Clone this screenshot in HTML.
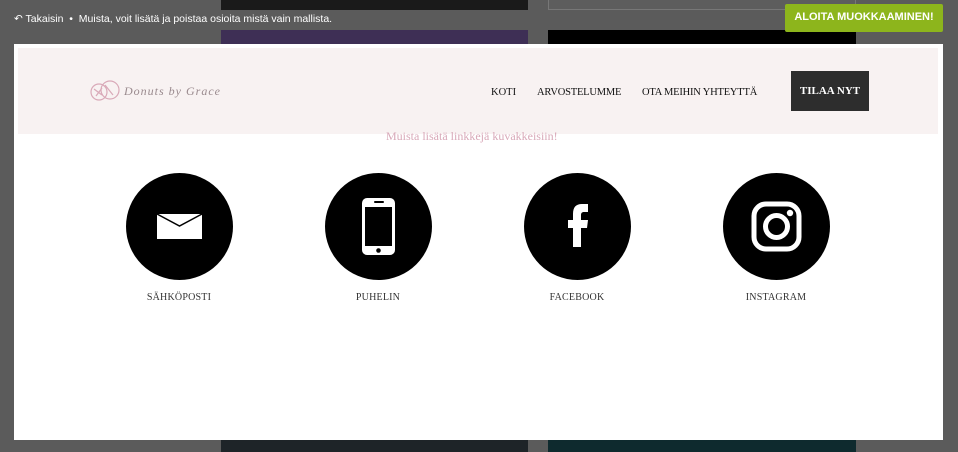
<!DOCTYPE html>
<html><head><meta charset="utf-8"><style>
*{margin:0;padding:0;box-sizing:border-box}
body{width:958px;height:452px;overflow:hidden;background:#5b5b5b;position:relative;font-family:"Liberation Sans",sans-serif}
.abs{position:absolute}
.serif{font-family:"Liberation Serif",serif}
.circ{position:absolute;width:107px;height:107px;border-radius:50%;background:#000;top:173px}
.lab{position:absolute;top:292px;width:160px;text-align:center;font-size:10px;color:#333;font-family:"Liberation Serif",serif;letter-spacing:.2px}
</style></head><body>
<div class="abs" style="left:221px;top:0;width:307px;height:10px;background:#1a1a1a"></div>
<div class="abs" style="left:548px;top:0;width:308px;height:10px;border:1px solid #777;border-top:none;background:#5d5d5d"></div>
<div class="abs" style="left:221px;top:30px;width:307px;height:20px;background:#3e2f55"></div>
<div class="abs" style="left:548px;top:30px;width:308px;height:20px;background:#000"></div>
<div class="abs" style="left:221px;top:440px;width:307px;height:12px;background:#1e2428"></div>
<div class="abs" style="left:548px;top:440px;width:308px;height:12px;background:#0e2a2e"></div>
<div class="abs" style="left:14px;top:13px;color:#fff;font-size:10.5px">&#8630; Takaisin &nbsp;•&nbsp; Muista, voit lisätä ja poistaa osioita mistä vain mallista.</div>
<div class="abs" style="left:785px;top:4px;width:158px;height:28px;background:#8db51c;color:#fff;font-size:11px;font-weight:bold;text-align:center;line-height:26px;border-radius:2px">ALOITA MUOKKAAMINEN!</div>
<div class="abs" style="left:14px;top:44px;width:929px;height:396px;background:#fff"></div>
<div class="abs" style="left:18px;top:48px;width:920px;height:86px;background:#f8f2f2"></div>
<svg class="abs" style="left:89px;top:79px" width="32" height="24" viewBox="0 0 32 24"><g fill="none" stroke="#d9a9b8" stroke-width="1.2"><circle cx="10" cy="13" r="8"/><circle cx="21" cy="11" r="9"/><path d="M5 10l8 6M16 6l8 10M7 17l6-8"/></g></svg>
<div class="abs serif" style="left:124px;top:84px;font-size:12px;font-style:italic;color:#9a8a8e;letter-spacing:1px">Donuts by Grace</div>
<div class="abs serif" style="left:491px;top:87px;font-size:10.5px;color:#111">KOTI</div>
<div class="abs serif" style="left:537px;top:87px;font-size:10.5px;color:#111;letter-spacing:-.2px">ARVOSTELUMME</div>
<div class="abs serif" style="left:642px;top:87px;font-size:10.5px;color:#111;letter-spacing:-.2px">OTA MEIHIN YHTEYTTÄ</div>
<div class="abs serif" style="left:791px;top:71px;width:78px;height:40px;background:#2d2d2d;color:#fff;font-size:11px;font-weight:bold;text-align:center;line-height:40px">TILAA NYT</div>
<div class="abs serif" style="left:386px;top:131px;font-size:12px;color:#d8a8b8;height:13px;overflow:hidden;line-height:10px">Muista lisätä linkkejä kuvakkeisiin!</div>
<div class="circ" style="left:126px"><svg width="107" height="107"><rect x="31" y="41" width="45" height="25" fill="#fff"/><path d="M31 41l22.5 12L76 41" fill="none" stroke="#000" stroke-width="1.5"/></svg></div>
<div class="circ" style="left:325px"><svg width="107" height="107"><rect x="37" y="25" width="33" height="57" rx="5" fill="#fff"/><rect x="40" y="34" width="27" height="39" fill="#000"/><rect x="49" y="28" width="10" height="2" rx="1" fill="#000"/><circle cx="53.5" cy="77.5" r="2.3" fill="#000"/></svg></div>
<div class="circ" style="left:524px"><svg width="107" height="107"><path d="M49 74V55h-5v-8h5v-6c0-7 3-10 9-10h6v8h-4c-2 0-3 1-3 3v5h7l-1 8h-6v19z" fill="#fff"/></svg></div>
<div class="circ" style="left:723px"><svg width="107" height="107"><rect x="31" y="31" width="45" height="45" rx="12" fill="none" stroke="#fff" stroke-width="5"/><circle cx="53.5" cy="53.5" r="11" fill="none" stroke="#fff" stroke-width="5"/><circle cx="67" cy="40" r="3.2" fill="#fff"/></svg></div>
<div class="lab" style="left:99px">SÄHKÖPOSTI</div>
<div class="lab" style="left:298px">PUHELIN</div>
<div class="lab" style="left:497px">FACEBOOK</div>
<div class="lab" style="left:696px">INSTAGRAM</div>
</body></html>
